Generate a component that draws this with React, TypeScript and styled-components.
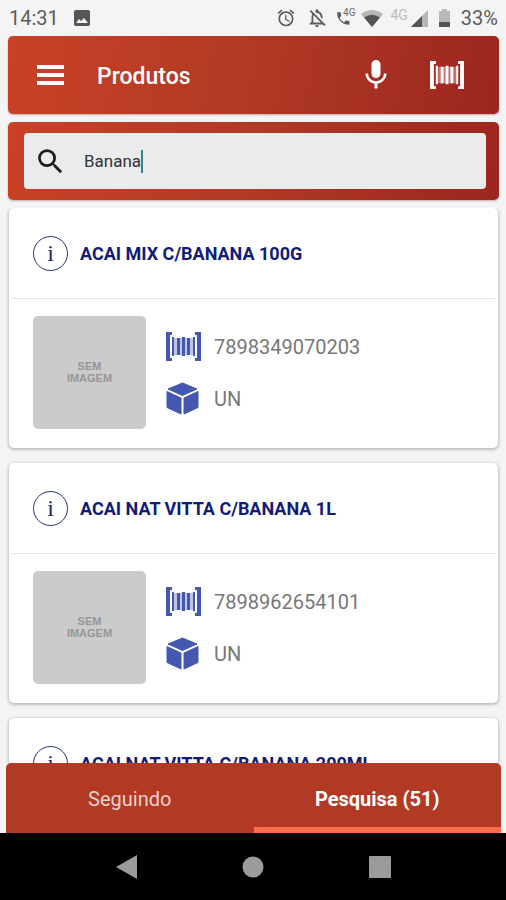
import React, { useState } from "react";
import styled, { createGlobalStyle } from "styled-components";
import {
  MdAlarm,
  MdMic,
  MdOutlineNotificationsOff,
  MdPhone,
  MdSearch,
} from "react-icons/md";

const GlobalStyle = createGlobalStyle`
  * { box-sizing: border-box; }
  body {
    margin: 0;
    background: #f4f4f4;
    font-family: Roboto, "Liberation Sans", sans-serif;
  }
  button { font-family: inherit; cursor: pointer; }
`;

const redGradient = "linear-gradient(100deg, #c94127 0%, #b03a24 50%, #9c251f 100%)";

const Screen = styled.div`
  display: flex;
  flex-direction: column;
  height: 100vh;
  overflow: hidden;
`;

const StatusBar = styled.header`
  flex: none;
  display: flex;
  align-items: center;
  justify-content: space-between;
  height: 36px;
  padding: 0 8px 0 9px;
  color: #5c5c5c;
  font-size: 20px;
`;

const StatusGroup = styled.div<{ $gap: number }>`
  display: flex;
  align-items: center;
  gap: ${({ $gap }) => $gap}px;
`;

const CallStatus = styled.span`
  display: flex;
  align-items: flex-start;
  width: 20px;
`;

const NetworkTag = styled.span<{ $small?: boolean }>`
  align-self: flex-start;
  margin-left: ${({ $small }) => ($small ? -9 : 0)}px;
  color: ${({ $small }) => ($small ? "#6a6a6a" : "#bdbdbd")};
  font-size: ${({ $small }) => ($small ? 10 : 14)}px;
  line-height: ${({ $small }) => ($small ? 8 : 10)}px;
`;

const Content = styled.main`
  flex: 1;
  min-height: 0;
  display: flex;
  flex-direction: column;
  gap: 8px;
  padding: 0 7px 0 8px;
`;

const RedPanel = styled.div`
  flex: none;
  display: flex;
  align-items: center;
  height: 78px;
  border-radius: 5px;
  background: ${redGradient};
  box-shadow: 0 1px 2px rgba(120, 20, 10, 0.35);
`;

const AppBar = styled(RedPanel)`
  padding: 0 35px 0 29px;
  color: #fff;
`;

const Title = styled.h1`
  flex: 1;
  margin: 0 0 0 33px;
  padding-top: 4px;
  font-size: 23px;
  font-weight: 500;
  line-height: 32px;
`;

const IconButton = styled.button`
  display: flex;
  align-items: center;
  justify-content: center;
  height: 40px;
  padding: 0;
  border: 0;
  background: none;
  color: inherit;
`;

const AppBarActions = styled.div`
  display: flex;
  gap: 36px;
`;

const SearchPanel = styled(RedPanel)`
  padding: 0 13px 0 16px;
`;

const SearchField = styled.label`
  flex: 1;
  display: flex;
  align-items: center;
  height: 56px;
  padding: 0 10px;
  border-radius: 4px;
  background: #eaebec;
  color: #1c1c1c;
`;

const SearchInput = styled.input`
  field-sizing: content;
  min-width: 2px;
  max-width: 80%;
  margin-left: 17px;
  padding: 0;
  border: 0;
  outline: 0;
  background: none;
  caret-color: transparent;
  color: #333;
  font: 400 17px/24px Roboto, "Liberation Sans", sans-serif;
`;

const Caret = styled.span`
  width: 2px;
  height: 23px;
  background: #2f8590;
`;

const ProductList = styled.ul`
  flex: 1;
  min-height: 0;
  display: flex;
  flex-direction: column;
  gap: 15px;
  margin: 0 -7px 0 -8px;
  padding: 0 8px 0 9px;
  overflow-y: auto;
  scrollbar-width: none;
  list-style: none;
`;

const Card = styled.li`
  flex: none;
  border-radius: 5px;
  background: #fff;
  box-shadow: 0 1px 3px 1px rgba(0, 0, 0, 0.22);
`;

const CardHeader = styled.div`
  display: flex;
  align-items: center;
  gap: 12px;
  height: 91px;
  margin: 0 3px;
  padding: 0 21px;
  border-bottom: 1px solid #e4e4e4;
`;

const InfoButton = styled.button`
  width: 35px;
  height: 35px;
  padding: 0;
  border: 1px solid #263383;
  border-radius: 50%;
  background: none;
  color: #1a2580;
  font: 400 24px/30px "Liberation Serif", serif;
`;

const ProductName = styled.h2`
  margin: 0;
  padding-top: 2px;
  color: #111c78;
  font-size: 18px;
  font-weight: 700;
  line-height: 24px;
`;

const CardBody = styled.div`
  display: flex;
  gap: 20px;
  padding: 17px 24px 19px;
`;

const Placeholder = styled.div`
  display: flex;
  align-items: center;
  justify-content: center;
  width: 113px;
  height: 113px;
  padding-bottom: 2px;
  border-radius: 5px;
  background: #cbcbcb;
  color: #969696;
  font: 700 11px/12px "Liberation Sans", sans-serif;
  text-align: center;
`;

const Details = styled.dl`
  display: flex;
  flex-direction: column;
  gap: 17px;
  margin: 0;
  padding-top: 13px;
`;

const Detail = styled.div`
  display: flex;
  align-items: center;
  gap: 12px;
  height: 35px;
`;

const DetailLabel = styled.dt`
  display: flex;
  width: 36px;
  color: #4558b0;
`;

const DetailValue = styled.dd`
  margin: 0;
  color: #777;
  font-size: 20px;
  line-height: 28px;
`;

const Tabs = styled.nav`
  flex: none;
  display: flex;
  height: 70px;
  margin: 0 5px 0 6px;
  border-radius: 5px 5px 0 0;
  background: #b23a25;
  overflow: hidden;
`;

const Tab = styled.button<{ $active?: boolean }>`
  flex: 1;
  padding: 8px 0 0;
  border: 0;
  border-bottom: 6px solid ${({ $active }) => ($active ? "#ff6d4b" : "transparent")};
  background: none;
  color: ${({ $active }) => ($active ? "#fff" : "#ecd0cb")};
  font-size: 20px;
  font-weight: ${({ $active }) => ($active ? 700 : 400)};
`;

const SystemBar = styled.footer`
  flex: none;
  display: grid;
  grid-template-columns: repeat(3, 1fr);
  align-items: center;
  height: 67px;
  padding: 0 12.5%;
  background: #000;
  color: #9b9b9b;
`;

const ImageIcon = () => (
  <svg width="16" height="16" viewBox="0 0 16 16">
    <rect width="16" height="16" rx="2" fill="#555" />
    <path d="M2 13l3-4 2 2 3-3 4 5z" fill="#f4f4f4" />
  </svg>
);

const WifiIcon = () => (
  <svg width="22" height="17" viewBox="0 0 22 17">
    <path d="M0 4Q11-4 22 4L11 17z" fill="#b5b5b5" />
    <path d="M3 7.5Q11 2 19 7.5L11 17z" fill="#555" />
  </svg>
);

const SignalIcon = () => (
  <svg width="17" height="17" viewBox="0 0 17 17">
    <path d="M17 0v17H0z" fill="#b5b5b5" />
    <path d="M11 6v11H0z" fill="#555" />
  </svg>
);

const BatteryIcon = () => (
  <svg width="11" height="18" viewBox="0 0 11 18">
    <path d="M3 0h5v2h3v16H0V2h3z" fill="#b8b8b8" />
    <path d="M0 13h11v5H0z" fill="#555" />
  </svg>
);

const MenuIcon = () => (
  <svg width="27" height="20" viewBox="0 0 27 20" fill="currentColor">
    <path d="M0 0h27v4H0zM0 8h27v4H0zM0 16h27v4H0z" />
  </svg>
);

const BarcodeIcon = ({ size }: { size: number }) => (
  <svg width={size} height={(size * 29) / 35} viewBox="0 0 35 29" fill="currentColor">
    <path d="M0 0h6v3H4v23h2v3H0zM35 0h-6v3h2v23h-2v3h6z" />
    <path d="M6 6h23v17H6z" opacity="0.35" />
    <path d="M6 5h2v19H6zM11 6h3v17h-3zM16 5h3v19h-3zM21 6h3v17h-3zM27 5h2v19h-2z" />
  </svg>
);

const CubeIcon = () => (
  <svg
    width="33"
    height="33"
    viewBox="0 0 33 33"
    fill="currentColor"
    stroke="currentColor"
    strokeLinejoin="round"
  >
    <path d="M16.5 1L31 7 16.5 13.500 2 7zM1 9.500L15 16v16L1 25.500zM32 9.500L18 16v16L32 25.500z" />
  </svg>
);

const NavButton = ({ label, children }: { label: string; children: React.ReactNode }) => (
  <IconButton aria-label={label}>
    <svg width="24" height="24" viewBox="0 0 24 24" fill="currentColor">
      {children}
    </svg>
  </IconButton>
);

const products = [
  { name: "ACAI MIX C/BANANA 100G", code: "7898349070203", unit: "UN" },
  { name: "ACAI NAT VITTA C/BANANA 1L", code: "7898962654101", unit: "UN" },
  { name: "ACAI NAT VITTA C/BANANA 200ML", code: "7898962654118", unit: "UN" },
];

const ProductCard = ({ name, code, unit }: (typeof products)[number]) => (
  <Card>
    <CardHeader>
      <InfoButton aria-label={`Informações: ${name}`}>i</InfoButton>
      <ProductName>{name}</ProductName>
    </CardHeader>
    <CardBody>
      <Placeholder>
        SEM
        <br />
        IMAGEM
      </Placeholder>
      <Details>
        <Detail>
          <DetailLabel aria-label="Código de barras">
            <BarcodeIcon size={35} />
          </DetailLabel>
          <DetailValue>{code}</DetailValue>
        </Detail>
        <Detail>
          <DetailLabel aria-label="Unidade">
            <CubeIcon />
          </DetailLabel>
          <DetailValue>{unit}</DetailValue>
        </Detail>
      </Details>
    </CardBody>
  </Card>
);

export default function App() {
  const [query, setQuery] = useState("Banana");
  const [tab, setTab] = useState("search");

  return (
    <Screen>
      <GlobalStyle />
      <StatusBar>
        <StatusGroup $gap={15}>
          <span>14:31</span>
          <ImageIcon />
        </StatusGroup>
        <StatusGroup $gap={11}>
          <StatusGroup $gap={7}>
            <StatusGroup $gap={10}>
              <MdAlarm size={20} />
              <MdOutlineNotificationsOff size={22} />
            </StatusGroup>
            <StatusGroup $gap={6}>
              <CallStatus>
                <MdPhone size={19} />
                <NetworkTag $small>4G</NetworkTag>
              </CallStatus>
              <WifiIcon />
            </StatusGroup>
            <StatusGroup $gap={3}>
              <NetworkTag>4G</NetworkTag>
              <SignalIcon />
            </StatusGroup>
          </StatusGroup>
          <BatteryIcon />
          <span>33%</span>
        </StatusGroup>
      </StatusBar>
      <Content>
        <AppBar>
          <IconButton aria-label="Menu">
            <MenuIcon />
          </IconButton>
          <Title>Produtos</Title>
          <AppBarActions>
            <IconButton aria-label="Pesquisa por voz">
              <MdMic size={36} />
            </IconButton>
            <IconButton aria-label="Ler código de barras">
              <BarcodeIcon size={34} />
            </IconButton>
          </AppBarActions>
        </AppBar>
        <SearchPanel>
          <SearchField>
            <MdSearch size={33} />
            <SearchInput
              aria-label="Pesquisar produtos"
              value={query}
              onChange={(event) => setQuery(event.target.value)}
            />
            <Caret />
          </SearchField>
        </SearchPanel>
        <ProductList>
          {products.map((product) => (
            <ProductCard key={product.code} {...product} />
          ))}
        </ProductList>
      </Content>
      <Tabs>
        <Tab $active={tab === "following"} onClick={() => setTab("following")}>
          Seguindo
        </Tab>
        <Tab $active={tab === "search"} onClick={() => setTab("search")}>
          Pesquisa (51)
        </Tab>
      </Tabs>
      <SystemBar>
        <NavButton label="Voltar">
          <path d="M22 0v24L1 12z" />
        </NavButton>
        <NavButton label="Início">
          <circle cx="12" cy="12" r="10.5" />
        </NavButton>
        <NavButton label="Recentes">
          <rect x="1" y="1" width="22" height="22" rx="1" />
        </NavButton>
      </SystemBar>
    </Screen>
  );
}
